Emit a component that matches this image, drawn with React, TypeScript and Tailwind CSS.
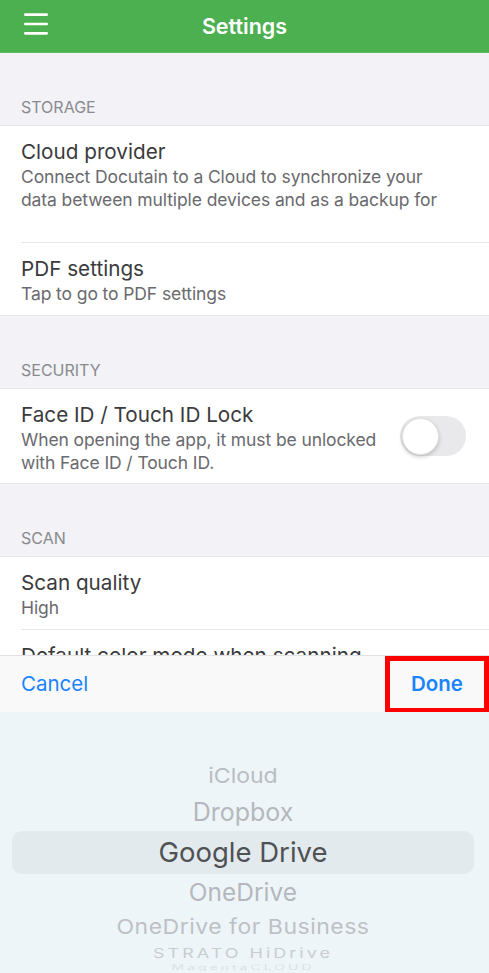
import { Menu } from "lucide-react";

const font = { fontFamily: "Inter, 'Noto Sans', sans-serif" };

function SectionLabel({ children }: { children: string }) {
  return (
    <div className="h-[72px] flex items-end px-[21px] pb-[6px] text-[16px] text-[#8a8a8e] uppercase">
      {children}
    </div>
  );
}

function Cell({ title, sub, extra }: { title: string; sub: string[]; extra?: string }) {
  return (
    <div className={`pl-[21px] pt-[13px] pb-[10px] ${extra ?? ""}`}>
      <div className="text-[20.7px] leading-[26px] text-[#3a3a3c]">{title}</div>
      {sub.map((s) => (
        <div key={s} className="text-[17.5px] leading-[23px] text-[#6a6a6e] tracking-[-0.1px]">
          {s}
        </div>
      ))}
    </div>
  );
}

const wheel = [
  { label: "iCloud", h: "h-[36px]", cls: "text-[23px] text-[#b9bdc1] scale-y-90" },
  { label: "Dropbox", h: "h-[37px]", cls: "text-[25px] text-[#b4b8bc]" },
  { label: "Google Drive", h: "h-[43px]", cls: "text-[27.5px] text-[#4f5254]" },
  { label: "OneDrive", h: "h-[37px]", cls: "text-[24.5px] text-[#b4b8bc]" },
  { label: "OneDrive for Business", h: "h-[33px]", cls: "text-[23px] text-[#bdc1c5] tracking-[0.5px] scale-y-90" },
  { label: "STRATO HiDrive", h: "h-[17px]", cls: "text-[18px] leading-[18px] text-[#c9cdd0] tracking-[3px] scale-y-75" },
  { label: "MagentaCLOUD", h: "h-[12px]", cls: "text-[14px] leading-[14px] text-[#dde1e4] tracking-[3px] scale-y-50" },
];

export default function App() {
  return (
    <div className="h-[973px] w-full flex flex-col overflow-hidden bg-[#f2f2f7]" style={font}>
      <header className="h-[53px] shrink-0 bg-[#4caf50] flex items-center relative border-b border-[#5cbc60]">
        <Menu className="absolute left-[20px] top-[8px] text-white" size={32} strokeWidth={2} />
        <h1 className="w-full text-center text-white text-[21.5px] font-semibold">Settings</h1>
      </header>

      <div className="flex-1 overflow-hidden">
        <SectionLabel>Storage</SectionLabel>
        <div className="bg-white border-y border-[#e5e5ea]">
          <Cell
            title="Cloud provider"
            sub={[
              "Connect Docutain to a Cloud to synchronize your",
              "data between multiple devices and as a backup for",
            ]}
            extra="h-[116px]"
          />
          <div className="ml-[21px] border-t border-[#e5e5ea]" />
          <Cell title="PDF settings" sub={["Tap to go to PDF settings"]} extra="h-[72px]" />
        </div>

        <SectionLabel>Security</SectionLabel>
        <div className="bg-white border-y border-[#e5e5ea] flex items-center pr-[23px]">
          <div className="flex-1">
            <Cell
              title="Face ID / Touch ID Lock"
              sub={["When opening the app, it must be unlocked", "with Face ID / Touch ID."]}
              extra="h-[94px]"
            />
          </div>
          <div className="w-[66px] h-[40px] rounded-full bg-[#e9e9eb] p-[1.5px] flex">
            <div className="w-[37px] h-[37px] rounded-full bg-white shadow-[0_2px_4px_rgba(0,0,0,0.2)] border border-[#e0e0e0]" />
          </div>
        </div>

        <SectionLabel>Scan</SectionLabel>
        <div className="bg-white border-t border-[#e5e5ea]">
          <Cell title="Scan quality" sub={["High"]} extra="h-[72px]" />
          <div className="ml-[21px] border-t border-[#e5e5ea]" />
          <Cell title="Default color mode when scanning" sub={[]} />
        </div>
      </div>

      <div className="h-[57px] shrink-0 bg-[#f9f9f9] flex items-center justify-between pl-[21px] border-t border-[#e2e2e2]">
        <button className="text-[20.5px] text-[#1a84ff]">Cancel</button>
        <button className="h-[57px] w-[104px] border-[5px] border-[#ff0000] text-[20.5px] font-semibold text-[#1a84ff] flex items-center justify-center">
          Done
        </button>
      </div>

      <div className="h-[261px] shrink-0 bg-[#eef5f9] pt-[46px] flex flex-col">
        {wheel.map((w) => (
          <div
            key={w.label}
            className={`${w.h} shrink-0 flex items-center justify-center ml-[12px] mr-[15px] ${
              w.label === "Google Drive" ? "bg-[#e3eaee] rounded-[10px]" : ""
            }`}
          >
            <span className={`${w.cls} whitespace-nowrap`}>{w.label}</span>
          </div>
        ))}
      </div>
    </div>
  );
}
